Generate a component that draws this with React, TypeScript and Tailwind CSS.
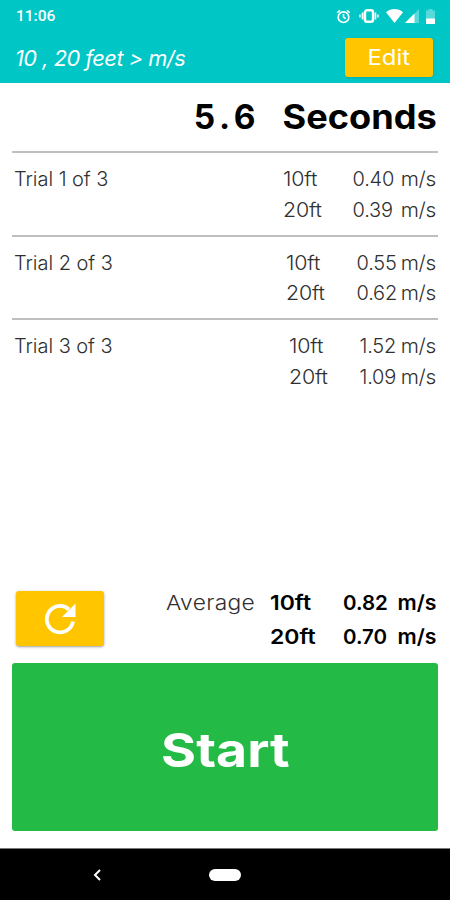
import type React from "react"

interface Speed {
  distance: string
  value: string
}

interface Trial {
  id: number
  columns: string
  speeds: Speed[]
}

const trials: Trial[] = [
  {
    id: 1,
    columns: "grid-cols-[70px_84px]",
    speeds: [
      { distance: "10ft", value: "0.40" },
      { distance: "20ft", value: "0.39" },
    ],
  },
  {
    id: 2,
    columns: "grid-cols-[71px_80px]",
    speeds: [
      { distance: "10ft", value: "0.55" },
      { distance: "20ft", value: "0.62" },
    ],
  },
  {
    id: 3,
    columns: "grid-cols-[71px_77px]",
    speeds: [
      { distance: "10ft", value: "1.52" },
      { distance: "20ft", value: "1.09" },
    ],
  },
]

const StatusBar: React.FC = () => (
  <div className="flex h-8 items-center justify-between pr-[15px] pl-4 text-white">
    <span className="pt-[2px] font-[Roboto] text-[15.5px] font-medium">11:06</span>
    <div className="flex items-center">
      {/* Alarm */}
      <svg className="h-[15px] w-[15px]" viewBox="0 0 24 24" fill="none" stroke="currentColor" strokeWidth="2.6">
        <circle cx="12" cy="13" r="8.5" />
        <path d="M12 8v5l3.5 2.5M2 6l4.5-4M22 6l-4.5-4" />
      </svg>
      {/* Vibrate */}
      <svg className="ml-2 h-[14px] w-5" viewBox="0 0 20 14" fill="none" stroke="currentColor">
        <rect x="6" y="1.2" width="8" height="11.6" rx="2" strokeWidth="2.4" />
        <path d="M3.6 3.5v7M16.4 3.5v7" strokeWidth="1.8" />
        <path d="M1 5.5v3M19 5.5v3" strokeWidth="1.4" />
      </svg>
      {/* Wifi */}
      <svg className="ml-[7px] h-[14px] w-[17px]" viewBox="0 0 17 14" fill="currentColor">
        <path d="M8.5 14 0 3.3C5-1 12-1 17 3.3Z" />
      </svg>
      {/* Signal */}
      <svg className="ml-[2px] h-[14px] w-[14px]" viewBox="0 0 14 14" fill="currentColor">
        <path d="M0 14 14 0v14Z" opacity=".35" />
        <path d="M0 14 9.5 4.5V14Z" />
      </svg>
      {/* Battery */}
      <svg className="ml-[7px] h-[15px] w-[9px]" viewBox="0 0 9 15" fill="currentColor">
        <path d="M0 1.5h2.5V0h4v1.5H9V15H0Z" opacity=".35" />
        <path d="M0 9.5h9V15H0Z" />
      </svg>
    </div>
  </div>
)

const SpeedValue: React.FC<{ value: string }> = ({ value }) => (
  <span className="flex justify-between">
    <span>{value}</span>
    <span className="origin-right scale-x-[1.04]">m/s</span>
  </span>
)

const TrialRow: React.FC<{ trial: Trial }> = ({ trial }) => (
  <div className="flex h-[83.5px] justify-between border-t-2 border-[#bfbfbf] pt-[11px] pr-[1.5px] pl-[2px] text-[20px] leading-[30.5px] font-light tracking-[-0.2px] text-[#303030]">
    <span className="tracking-[-0.05px]">Trial {trial.id} of 3</span>
    <div>
      {trial.speeds.map((speed) => (
        <div key={speed.distance} className={`grid ${trial.columns}`}>
          <span className="origin-left scale-x-[1.07]">{speed.distance}</span>
          <SpeedValue value={speed.value} />
        </div>
      ))}
    </div>
  </div>
)

export default function App() {
  return (
    <div className="flex h-[900px] w-[450px] flex-col overflow-hidden bg-white font-[Inter,sans-serif]">
      {/* Header */}
      <header className="h-[83px] bg-[#00c6c6]">
        <StatusBar />
        <div className="flex items-center justify-between pt-[6px] pr-[17px] pl-[15px] text-white">
          <h1 className="origin-left scale-x-[1.04] pt-[2px] text-[21px] tracking-[-0.5px] italic">10 , 20 feet &gt; m/s</h1>
          <button className="h-[39px] w-[88px] rounded-[3px] bg-[#ffc600] pt-px text-[21px] shadow-sm">
            <span className="inline-block scale-x-[1.14]">Edit</span>
          </button>
        </div>
      </header>

      {/* Results */}
      <main className="flex flex-1 flex-col px-3">
        <div className="flex h-[68px] items-center justify-end pr-[1px] text-[33.5px] font-bold text-black">
          <span className="mr-[34px] tracking-[4.6px]">5.6</span>
          <span className="origin-right scale-x-[1.08]">Seconds</span>
        </div>
        {trials.map((trial) => (
          <TrialRow key={trial.id} trial={trial} />
        ))}

        <div className="mt-auto flex items-start justify-between pr-[2px] pl-1">
          <button className="mt-[6px] flex h-[55px] w-[88px] items-center justify-center rounded-[3px] bg-[#ffc600] shadow-sm shadow-black/30">
            <svg className="h-[32px] w-[32px]" viewBox="0 0 32 32" fill="none">
              <path d="M29 18.5A13.2 13.2 0 1 1 25 6.5" stroke="white" strokeWidth="3.8" />
              <path d="M31.5.5V14H18Z" fill="white" />
            </svg>
          </button>
          <div className="grid grid-cols-[104px_73px_93px] pt-px text-[20.5px] leading-[34px] font-semibold text-black">
            <span className="origin-left scale-x-[1.11] font-light tracking-[0.3px] text-[#303030]">Average</span>
            <span className="origin-left scale-x-[1.12]">10ft</span>
            <SpeedValue value="0.82" />
            <span className="col-start-2 origin-left scale-x-[1.12]">20ft</span>
            <SpeedValue value="0.70" />
          </div>
        </div>

        <button className="mt-[9px] mb-[17px] h-[168px] rounded-[3px] bg-[#24ba46] pt-[6px] text-[47px] font-bold text-white">
          <span className="inline-block scale-x-[1.14]">Start</span>
        </button>
      </main>

      {/* Navigation */}
      <nav className="relative flex h-[52px] items-center justify-center border-t border-[#777] bg-black">
        <svg className="absolute left-[93px] h-3 w-2" viewBox="0 0 8 12" fill="none" stroke="white" strokeWidth="2">
          <path d="M7 1 2 6l5 5" />
        </svg>
        <div className="h-[12px] w-8 rounded-full bg-white" />
      </nav>
    </div>
  )
}
